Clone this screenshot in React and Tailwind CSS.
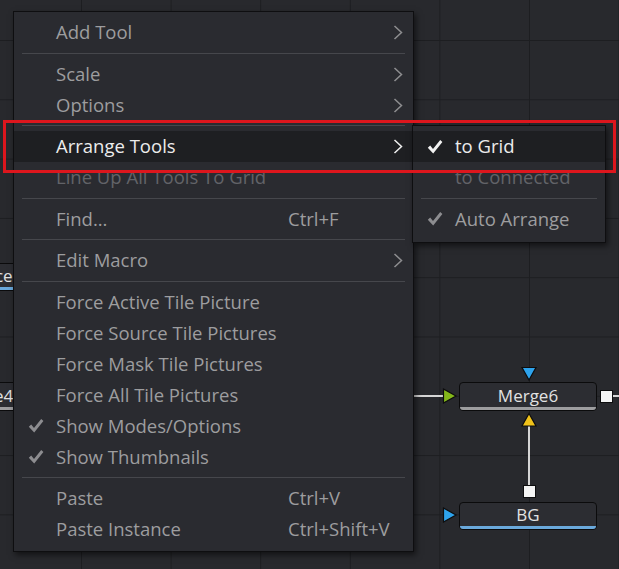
import React from 'react';

const font = { fontFamily: '"Open Sans", "Noto Sans", sans-serif' };

const menuItems = [
  { label: 'Add Tool', sub: true },
  'sep',
  { label: 'Scale', sub: true },
  { label: 'Options', sub: true },
  'sep',
  { label: 'Arrange Tools', sub: true, active: true },
  { label: 'Line Up All Tools To Grid', disabled: true },
  'sep',
  { label: 'Find...', shortcut: 'Ctrl+F' },
  'sep',
  { label: 'Edit Macro', sub: true },
  'sep',
  { label: 'Force Active Tile Picture' },
  { label: 'Force Source Tile Pictures' },
  { label: 'Force Mask Tile Pictures' },
  { label: 'Force All Tile Pictures' },
  { label: 'Show Modes/Options', checked: true },
  { label: 'Show Thumbnails', checked: true },
  'sep',
  { label: 'Paste', shortcut: 'Ctrl+V' },
  { label: 'Paste Instance', shortcut: 'Ctrl+Shift+V' },
];

const subItems = [
  { label: 'to Grid', checked: true, active: true },
  { label: 'to Connected', disabled: true },
  'sep',
  { label: 'Auto Arrange', checked: true },
];

const Check = ({ className }) => (
  <svg width="16" height="16" viewBox="0 0 16 16" className={className}>
    <path d="M0.8 8.8 L3.2 6.6 L6 10 L13.2 1 L15.4 3 L6.2 14.6 Z" fill="currentColor" />
  </svg>
);

const Chevron = ({ className }) => (
  <svg width="10" height="15" viewBox="0 0 10 15" className={className}>
    <polyline points="1.5,1 8.5,7.5 1.5,14" fill="none" stroke="currentColor" strokeWidth="1.5" />
  </svg>
);

const MenuRow = ({ item, labelWidth }) => {
  const textColor = item.active
    ? 'text-[#ececec]'
    : item.disabled
      ? 'text-[#626368]'
      : 'text-[#9d9d9f]';
  return (
    <div className={`h-[31px] flex items-center ${item.active ? 'bg-[#1e1f22]' : ''}`}>
      <div className="w-[42px] pl-[14px] flex items-center">
        {item.checked && <Check className={item.active ? 'text-[#f2f2f2]' : 'text-[#8d8d90]'} />}
      </div>
      <span className={`text-[18.5px] leading-none whitespace-nowrap ${textColor}`} style={{ width: labelWidth }}>
        {item.label}
      </span>
      <span className="flex-1 text-[18.5px] leading-none whitespace-nowrap text-[#9d9d9f]">{item.shortcut}</span>
      {item.sub && (
        <div className="pr-[10px]">
          <Chevron className={item.active ? 'text-[#f0f0f0]' : 'text-[#8e8e90]'} />
        </div>
      )}
    </div>
  );
};

const Separator = ({ inset }) => (
  <div className={`h-[10.5px] flex items-center ${inset}`}>
    <div className="h-px w-full bg-[#46474c]" />
  </div>
);

const Node = ({ label, className, strip, textClass = 'justify-center' }) => (
  <div className={`absolute rounded-[4px] border border-[#0b0b0c] bg-[#2c2d32] overflow-hidden flex flex-col ${className}`}>
    <div className={`flex-1 flex items-center ${textClass} text-[17px] leading-none text-[#e2e2e2]`}>{label}</div>
    <div className={`h-[3px] ${strip}`} />
  </div>
);

const Tri = ({ dir, fill, className }) => {
  const pts = {
    down: '1,1.5 15,1.5 8,14',
    up: '8,1.5 15,14 1,14',
    right: '1.5,1 14,8 1.5,15',
  }[dir];
  return (
    <svg width="16" height="16" viewBox="0 0 16 16" className={`absolute ${className}`}>
      <polygon points={pts} fill={fill} stroke="#0d0d0e" strokeWidth="1.2" />
    </svg>
  );
};

export default function App() {
  return (
    <div
      className="relative w-[619px] h-[569px] overflow-hidden bg-[#28292d] bg-[linear-gradient(90deg,#1d1e21_1px,transparent_1px),linear-gradient(#1d1e21_1px,transparent_1px)] bg-[size:89.6px_59.3px] bg-[position:81px_40px]"
      style={font}
    >
      {/* nodes partly hidden behind the menu */}
      <Node label="Source" className="left-[-60px] top-[263px] w-[150px] h-[28px]" strip="bg-[#6aa9dc]" textClass="justify-start pl-[17px]" />
      <Node label="Merge4" className="left-[-66px] top-[382px] w-[150px] h-[29px]" strip="bg-[#9d9d9f]" textClass="justify-start pl-[18px]" />

      {/* connections */}
      <div className="absolute left-[414px] top-[395px] w-[30px] h-[2px] bg-[#d6d6d6]" />
      <div className="absolute left-[612px] top-[395px] w-[10px] h-[2px] bg-[#d6d6d6]" />
      <div className="absolute left-[528px] top-[425px] w-[2px] h-[62px] bg-[#d6d6d6]" />

      {/* Merge6 */}
      <Tri dir="down" fill="#2ea3ec" className="left-[521px] top-[366px]" />
      <Tri dir="right" fill="#84b81a" className="left-[442px] top-[388px]" />
      <Node label="Merge6" className="left-[459px] top-[382px] w-[138px] h-[29px]" strip="bg-[#9d9d9f]" />
      <div className="absolute left-[600px] top-[390px] w-[13px] h-[13px] bg-[#f4f4f4] border border-[#0d0d0e]" />
      <Tri dir="up" fill="#f0c21a" className="left-[521px] top-[412px]" />

      {/* BG */}
      <div className="absolute left-[523px] top-[485px] w-[13px] h-[13px] bg-[#f4f4f4] border border-[#0d0d0e]" />
      <Tri dir="right" fill="#2ea3ec" className="left-[442px] top-[507px]" />
      <Node label="BG" className="left-[459px] top-[502px] w-[138px] h-[28px]" strip="bg-[#6aa9dc]" />

      {/* context menu */}
      <div className="absolute left-[13px] top-[11px] w-[401px] border border-[#0e0e10] bg-[#2a2b30] pt-[5px] pb-[6px] shadow-[2px_3px_6px_rgba(0,0,0,0.55)]">
        {menuItems.map((item, i) =>
          item === 'sep' ? (
            <Separator key={i} inset="px-[8px]" />
          ) : (
            <MenuRow key={i} item={item} labelWidth={232} />
          )
        )}
      </div>

      {/* sub menu */}
      <div className="absolute left-[412px] top-[125px] w-[194px] border border-[#0e0e10] bg-[#2a2b30] pt-[5px] pb-[7px] shadow-[2px_3px_6px_rgba(0,0,0,0.55)]">
        {subItems.map((item, i) =>
          item === 'sep' ? (
            <Separator key={i} inset="px-[8px]" />
          ) : (
            <MenuRow key={i} item={item} labelWidth={140} />
          )
        )}
      </div>

      {/* red highlight box */}
      <div className="absolute left-[3px] top-[120px] w-[613px] h-[53px] border-[3px] border-[#dd161d]" />
    </div>
  );
}
